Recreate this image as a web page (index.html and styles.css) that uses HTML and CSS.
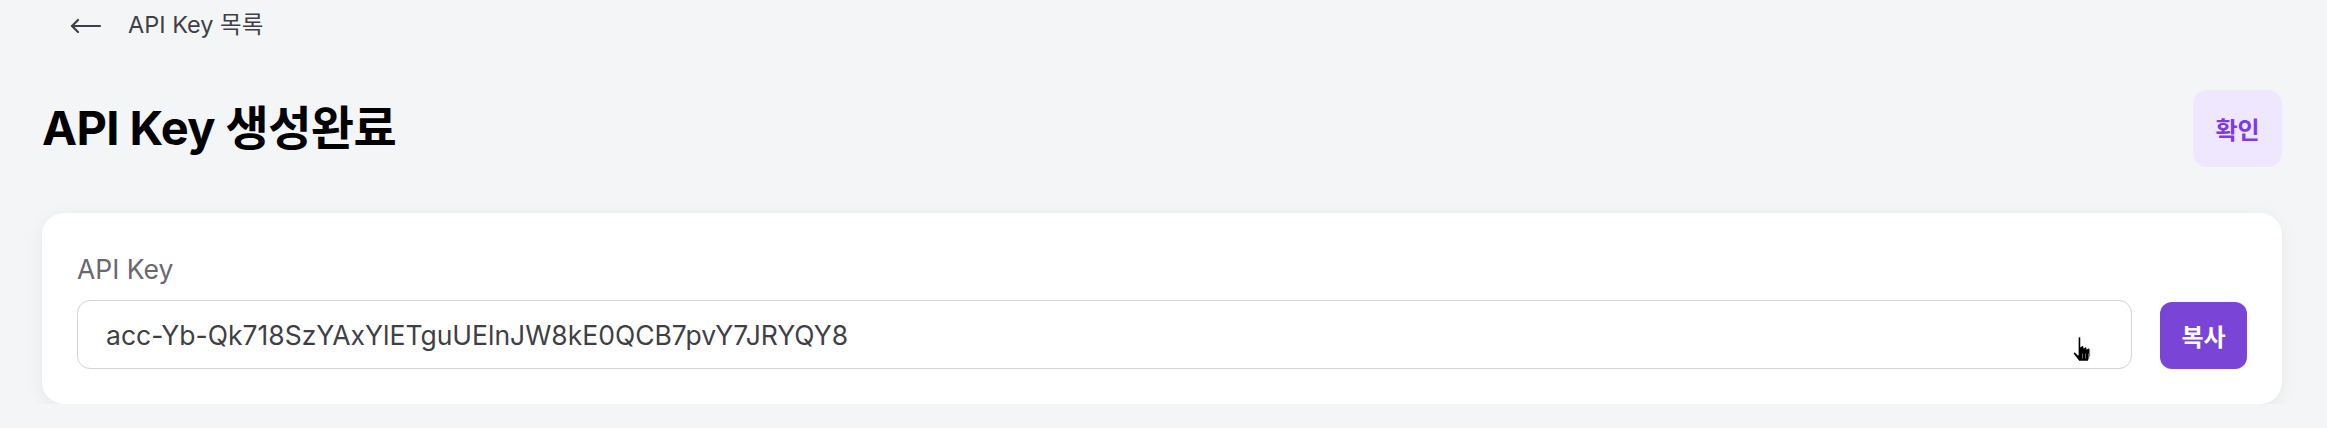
FILE: index.html
```html
<!DOCTYPE html>
<html lang="ko">
<head>
<meta charset="utf-8">
<title>API Key 생성완료</title>
<link rel="stylesheet" href="styles.css">
</head>
<body>
<div class="page">
  <a class="back" href="#">
    <svg class="back-icon" width="32" height="16" viewBox="0 0 32 16" fill="none" stroke="#3f3f46" stroke-width="2.2" stroke-linecap="round" stroke-linejoin="round">
      <path d="M2 8 H30"/>
      <path d="M8 2 L2 8 L8 14"/>
    </svg>
    <span>API Key 목록</span>
  </a>

  <div class="title-row">
    <h1 class="title">API Key 생성완료</h1>
    <button class="btn-confirm" type="button">확인</button>
  </div>

  <section class="card">
    <div class="label">API Key</div>
    <div class="field-row">
      <div class="key-field">
        <span class="key-text">acc-Yb-Qk718SzYAxYlETguUElnJW8kE0QCB7pvY7JRYQY8</span>
        <svg class="cursor" width="24" height="26" viewBox="0 0 17 22">
          <path d="M6 1.5 Q6 0.5 7.2 0.5 Q8.4 0.5 8.4 1.5 V9 Q8.6 8 9.8 8 Q11 8 11 9.2 V10 Q11.2 9 12.4 9 Q13.6 9 13.6 10.2 V11 Q13.8 10 15 10 Q16.2 10 16.2 11.2 V17 L14.6 21.5 H6.8 L2.2 15.6 Q1.4 14.3 2.6 13.6 Q3.6 13.2 4.4 14.2 L6 16 Z" fill="#000" stroke="#fff" stroke-width="1" stroke-linejoin="round"/>
          <path d="M9.8 15 V19 M12.4 15 V19 M15 15 V19" stroke="#888" stroke-width="0.7"/>
        </svg>
      </div>
      <button class="btn-copy" type="button">복사</button>
    </div>
  </section>
</div>
</body>
</html>
```

FILE: styles.css
```css
* {
  box-sizing: border-box;
}

html, body {
  margin: 0;
  padding: 0;
}

body {
  background: #f4f5f7;
  font-family: Inter, "Noto Sans CJK KR", "Noto Sans", sans-serif;
  color: #18181b;
}

.page {
  padding: 0 45px 0 42px;
}

.back {
  display: flex;
  align-items: center;
  height: 50px;
  padding-left: 28px;
  gap: 26px;
  color: #3f3f46;
  text-decoration: none;
  font-size: 23.5px;
  line-height: 36px;
}

.back-icon {
  display: block;
  margin-top: 2px;
}

.title-row {
  display: flex;
  align-items: center;
  justify-content: space-between;
  margin-top: 40px;
}

.title {
  margin: 0;
  font-size: 47px;
  line-height: 1.2;
  font-weight: 700;
  color: #000;
  letter-spacing: -0.6px;
}

.btn-confirm {
  width: 89px;
  height: 77px;
  border: 0;
  border-radius: 14px;
  background: #efe7fd;
  color: #7c3aed;
  font-family: inherit;
  font-size: 24px;
  font-weight: 600;
  cursor: pointer;
}

.card {
  margin-top: 46px;
  background: #fff;
  border-radius: 22px;
  padding: 36px 35px 35px 35px;
  box-shadow: 0 4px 18px rgba(0, 0, 0, 0.06);
}

.label {
  font-size: 26.5px;
  line-height: 40px;
  color: #6b6770;
}

.field-row {
  display: flex;
  align-items: center;
  gap: 28px;
  margin-top: 11px;
}

.key-field {
  position: relative;
  flex: 1;
  height: 69px;
  display: flex;
  align-items: center;
  border: 1.5px solid #d4d4d8;
  border-radius: 13px;
  padding: 0 28px;
  font-size: 26.5px;
  color: #3f3f46;
}

.cursor {
  position: absolute;
  right: 38px;
  top: 35px;
}

.btn-copy {
  width: 87px;
  height: 67px;
  border: 0;
  border-radius: 12px;
  background: #7a45d6;
  color: #fff;
  font-family: inherit;
  font-size: 24px;
  font-weight: 600;
  cursor: pointer;
  margin-top: 2px;
}
```
